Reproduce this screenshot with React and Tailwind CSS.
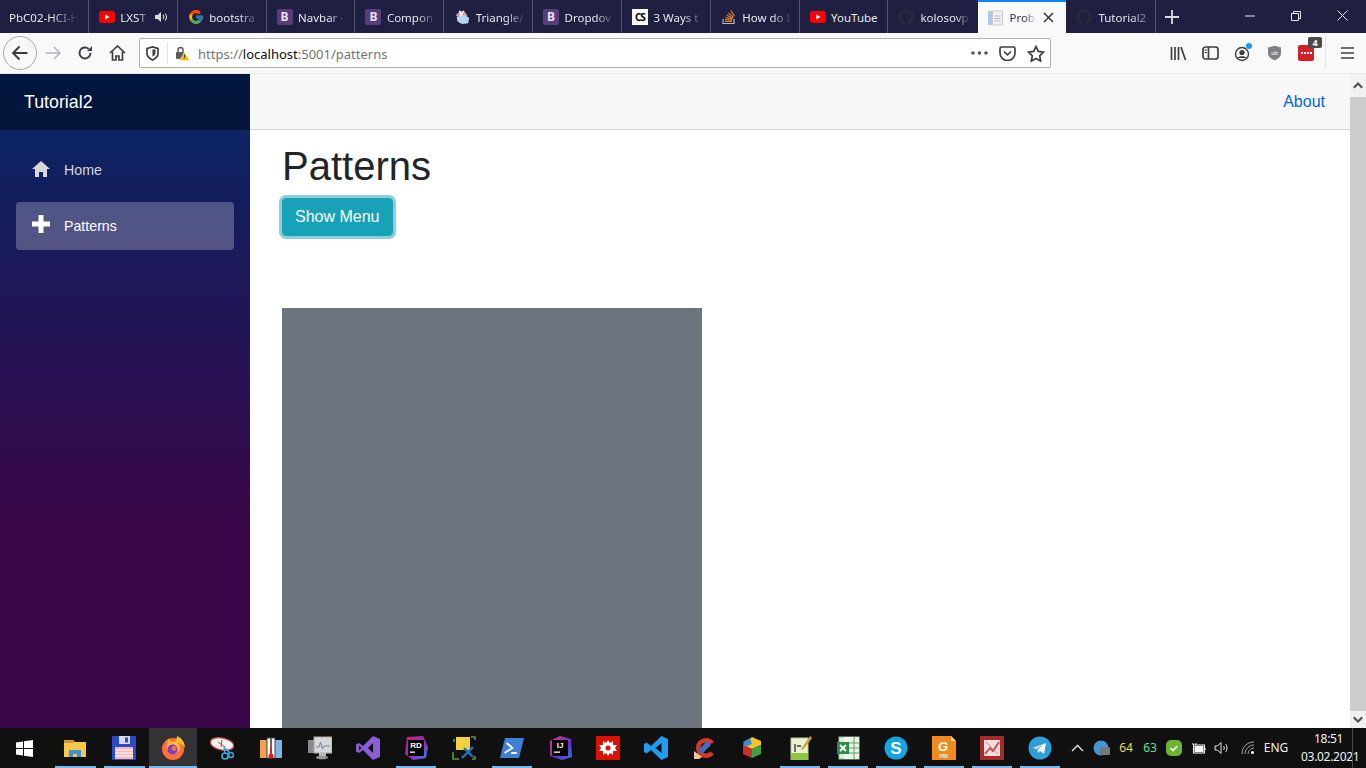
import React from "react";
import { FcGoogle } from "react-icons/fc";
import { FaGithub } from "react-icons/fa";

const YT = () => (
  <svg width="16" height="16" viewBox="0 0 16 16"><rect x="0" y="2" width="16" height="12" rx="3" fill="#f00" /><path d="M6.3 5.500v5L10.600 8z" fill="#fff" /></svg>
);
const BS = () => (
  <span className="w-4 h-4 rounded-[2px] bg-[#563d7c] text-[#e8e0f2] text-[12px] font-bold flex items-center justify-center leading-none">B</span>
);
const Mask = () => (
  <svg width="18" height="18" viewBox="0 0 18 18"><path d="M2 7l5-5 5 1 3 4-3 3H6z" fill="#c9a9a0" /><path d="M3 9l10-2 4 3-1 6-7 1-5-3z" fill="#b9d4ee" /><path d="M6 2l3 6M11 2L7 8" stroke="#fff" strokeWidth="1.300" /></svg>
);
const CS = () => (
  <span className="w-4 h-4 bg-white text-black text-[10px] font-bold flex items-center justify-center leading-none tracking-[-1px]">CS</span>
);
const SO = () => (
  <svg width="16" height="16" viewBox="0 0 16 16" fill="none"><path d="M2 10v4.500h11V10" stroke="#bcbbbb" strokeWidth="1.200" /><path d="M4 12.500h7M4 10.600l7 .6M4.600 8.400l6.800 1.800M5.600 6l6.300 3.200M7.400 3.800l5.200 4.600M9.600 1.500l3.800 5.400" stroke="#f48024" strokeWidth="1.100" /></svg>
);
const Doc = () => (
  <svg width="15" height="16" viewBox="0 0 15 16"><rect x="0" y="1" width="5" height="14" fill="#a9c8ea" /><rect x="4.500" y="1" width="10" height="14" fill="#f0f0f3" stroke="#c8c8cf" /><path d="M6.500 6h6M6.500 8.500h6M6.500 11h6" stroke="#b8b8c0" /></svg>
);
const GH = () => <FaGithub className="text-[#2a2a3c]" size={16} />;

const Speaker = () => (
  <svg width="14" height="14" viewBox="0 0 14 14" fill="none" className="absolute left-[65px] top-[10px]"><path d="M1 5h2.500L7 2v10L3.500 9H1z" fill="#d8d8de" /><path d="M9 5c1 1 1 3 0 4M11 3.500c1.800 2 1.800 5 0 7" stroke="#d8d8de" strokeWidth="1.100" /></svg>
);

const tabs = [
  { t: "PbC02-HCI-H" },
  { t: "LXST", i: <YT />, extra: <Speaker /> , w: "w-[30px]" },
  { t: "bootstra", i: <FcGoogle size={16} /> },
  { t: "Navbar ·", i: <BS /> },
  { t: "Compon", i: <BS /> },
  { t: "Triangle/", i: <Mask /> },
  { t: "Dropdov", i: <BS /> },
  { t: "3 Ways t", i: <CS /> },
  { t: "How do I", i: <SO /> },
  { t: "YouTube", i: <YT />, nofade: true },
];

function Tab({ tab }) {
  const fade = tab.nofade ? "" : "[mask-image:linear-gradient(90deg,#000_60%,transparent_100%)]";
  return (
    <div className="relative w-[88.85px] h-full shrink-0 flex items-center pl-[10px] border-r border-[#55566e]">
      {tab.i ? <span className="w-4 h-4 mr-[5.500px] shrink-0 flex items-center justify-center">{tab.i}</span> : null}
      <span className={`text-[11.5px] pt-[2px] text-[#e6e6ec] whitespace-nowrap overflow-hidden ${tab.w || "w-[50px]"} ${tab.i ? "" : "!w-[70px] -ml-px"} ${fade}`}>{tab.t}</span>
      {tab.extra}
    </div>
  );
}

const Back = () => (
  <div className="w-[34px] h-[34px] rounded-full border border-[#a8a8aa] bg-[#f9f9fa] flex items-center justify-center">
    <svg width="18" height="16" viewBox="0 0 18 16" fill="none" stroke="#3c3c40" strokeWidth="1.900"><path d="M16.500 8H2M8.500 1.500L2 8l6.500 6.500" /></svg>
  </div>
);

const TB = ({ w = 32, children }) => (
  <span style={{ width: w }} className="h-full shrink-0 flex items-center justify-center">{children}</span>
);

const S = { stroke: "#3f3f43", strokeWidth: 1.700, fill: "none" };

function Toolbar() {
  return (
    <div className="h-[41px] bg-[#f9f9fa] flex items-center shrink-0 border-b border-[#e8e8ea]">
      <div className="pl-[3px] w-[37px] shrink-0"><Back /></div>
      <TB w={32}><svg width="16" height="14" viewBox="0 0 16 14" fill="none" stroke="#b4b4b6" strokeWidth="1.500"><path d="M0.500 7H15M9 1l6 6-6 6" /></svg></TB>
      <TB w={32}><svg width="16" height="16" viewBox="0 0 16 16" {...S} strokeWidth="1.900"><path d="M13.500 8a5.500 5.500 0 1 1-1.800-4.100" /><path d="M15 1v5h-5" fill="#3f3f43" stroke="none" /></svg></TB>
      <TB w={32}><svg width="17" height="16" viewBox="0 0 17 16" {...S}><path d="M1 8l7.500-7 7.500 7" /><path d="M3.500 6.500V15h3.500v-4h3v4h3.500V6.500" /></svg></TB>
      <div className="w-[912px] h-[30px] ml-[6px] bg-white border border-[#b3b3b5] rounded-[2px] flex items-center shrink-0">
        <span className="w-[27px] pr-[2px] flex justify-center shrink-0">
          <svg width="13" height="15" viewBox="0 0 13 15" {...S}><path d="M1 2.500l5.500-1.500 5.500 1.500v5c0 3-2.500 5-5.500 6.500-3-1.500-5.500-3.500-5.500-6.500z" /><path d="M6.500 3.500h3v3.500c0 1.500-1.500 3-3 3.500z" fill="#3f3f43" stroke="none" /></svg>
        </span>
        <span className="w-px h-[22px] bg-[#e2e2e4] shrink-0" />
        <span className="w-[30px] pr-[1px] flex justify-center shrink-0">
          <svg width="15" height="15" viewBox="0 0 15 15"><rect x="1" y="6" width="8" height="7" rx="1" fill="#5c5c60" /><path d="M3 6V4a2.500 2.500 0 0 1 5 0v2" fill="none" stroke="#5c5c60" strokeWidth="1.500" /><path d="M9.500 6l5 8.500h-10z" fill="#f4b400" stroke="#f9f9fa" strokeWidth=".5" /><path d="M9.500 8.800v3" stroke="#333" /></svg>
        </span>
        <span className="text-[13px] pt-[3px] text-[#737373] whitespace-nowrap">https://<span className="text-[#0c0c0d]">localhost</span>:5001/patterns</span>
        <span className="ml-auto flex items-center h-full">
          <TB w={28}><svg width="17" height="4" viewBox="0 0 17 4" fill="#55555a"><circle cx="2" cy="2" r="1.800" /><circle cx="8.500" cy="2" r="1.800" /><circle cx="15" cy="2" r="1.800" /></svg></TB>
          <TB w={28}><svg width="17" height="15" viewBox="0 0 17 15" {...S}><path d="M1 2.500c0-1 .6-1.500 1.500-1.500h12c.9 0 1.500.5 1.500 1.500v4.500a7.500 7.500 0 0 1-15 0z" /><path d="M5 5.500l3.500 3.300L12 5.500" /></svg></TB>
          <span className="w-[1px]" />
          <TB w={28}><svg width="18" height="17" viewBox="0 0 18 17" {...S}><path d="M9 1.500l2.300 4.900 5.200.7-3.800 3.700 1 5.300L9 13.500l-4.700 2.600 1-5.300L1.500 7.100l5.200-.7z" /></svg></TB>
        </span>
      </div>
      <div className="ml-[112px] flex items-center h-full">
        <TB w={31}><svg width="17" height="15" viewBox="0 0 17 15" {...S}><path d="M1.500 1v13M5 1v13M8.500 1v13M11 1l4.500 13" /></svg></TB>
        <TB w={32}><svg width="17" height="14" viewBox="0 0 17 14" {...S}><rect x="1" y="1" width="15" height="12" rx="2.500" /><path d="M6.500 1v12" /><path d="M2.500 4h2.500M2.500 6.500h2.500" strokeWidth="1.200" /></svg></TB>
        <TB w={32}>
          <span className="relative w-[17px] h-[17px]">
            <svg width="17" height="17" viewBox="0 0 17 17" {...S} strokeWidth="1.400"><circle cx="8" cy="9" r="6.500" /><circle cx="8" cy="7.500" r="2.600" fill="#3f3f43" stroke="none" /><path d="M3.500 13c1-2.500 8-2.500 9 0" fill="#3f3f43" stroke="none" /></svg>
            <span className="absolute right-[-1px] top-[-2px] w-[6px] h-[6px] rounded-full bg-[#0a9dff]" />
          </span>
        </TB>
        <TB w={32}><svg width="15" height="16" viewBox="0 0 15 16"><path d="M7.500.8l6.500 1.700v6c0 3-3 5.500-6.500 6.800C4 14 1 11.500 1 8.500v-6z" fill="#7f7f86" /><text x="7.500" y="9.500" fontSize="6" fill="#fff" textAnchor="middle" fontFamily="Liberation Sans">ub</text></svg></TB>
        <TB w={32}>
          <span className="relative w-[16px] h-[16px] bg-[#d32027] rounded-[2px] flex items-center justify-center">
            <span className="flex gap-[1px]"><i className="w-[2px] h-[2px] bg-white" /><i className="w-[2px] h-[2px] bg-white" /><i className="w-[2px] h-[2px] bg-white" /><i className="w-[2px] h-[2px] bg-white" /></span>
            <span className="absolute left-[10px] top-[-8px] w-[14px] h-[11px] rounded-[2px] bg-[#4a4a4f] text-white text-[9px] font-bold leading-[11px] text-center">4</span>
          </span>
        </TB>
        <span className="w-px h-[32px] bg-[#e5e5e7] ml-[3px]" />
        <TB w={43}><svg width="13" height="12" viewBox="0 0 13 12" stroke="#3f3f43" strokeWidth="1.600"><path d="M0 1h13M0 6h13M0 11h13" /></svg></TB>
      </div>
    </div>
  );
}

function TitleBar() {
  return (
    <div className="h-[33px] bg-[#1f2041] flex shrink-0 font-['Noto_Sans','Open_Sans',sans-serif]">
      {tabs.map((t, i) => <Tab key={i} tab={t} />)}
      <div className="w-[90px] h-full flex items-center pl-[10px] shrink-0">
        <span className="w-4 h-4 mr-[6px] shrink-0"><GH /></span>
        <span className="text-[11.5px] pt-[2px] text-[#e6e6ec] whitespace-nowrap overflow-hidden w-[50px] [mask-image:linear-gradient(90deg,#000_70%,transparent_100%)]">kolosovp</span>
      </div>
      <div className="w-[88px] h-full bg-[#f9f9fa] border-t-2 border-[#0a84ff] flex items-center pl-[10px] shrink-0">
        <span className="mr-[6px]"><Doc /></span>
        <span className="text-[11.5px] pt-[1px] text-[#38383d] whitespace-nowrap overflow-hidden w-[27px] [mask-image:linear-gradient(90deg,#000_60%,transparent_100%)]">Probl</span>
        <svg width="11" height="11" viewBox="0 0 11 11" stroke="#38383d" strokeWidth="1.500" className="ml-[7px]"><path d="M1 1l9 9M10 1l-9 9" /></svg>
      </div>
      <div className="w-[90px] h-full flex items-center pl-[10px] shrink-0 border-r border-[#55566e]">
        <span className="w-4 h-4 mr-[6px] shrink-0"><GH /></span>
        <span className="text-[11.5px] pt-[2px] text-[#e6e6ec] whitespace-nowrap overflow-hidden w-[48px] [mask-image:linear-gradient(90deg,#000_65%,#0006_100%)]">Tutorial2</span>
      </div>
      <span className="w-[32px] h-full flex items-center justify-center shrink-0">
        <svg width="14" height="14" viewBox="0 0 14 14" stroke="#dcdce2" strokeWidth="1.800"><path d="M7 0v14M0 7h14" /></svg>
      </span>
      <div className="ml-auto flex h-full">
        <span className="w-[46px] flex items-center justify-center -mt-[2px]"><svg width="10" height="10" viewBox="0 0 10 10" stroke="#e8e8ee"><path d="M0 5h10" /></svg></span>
        <span className="w-[46px] flex items-center justify-center -mt-[2px]"><svg width="10" height="10" viewBox="0 0 10 10" fill="none" stroke="#e8e8ee"><path d="M.5 2.500h7v7h-7zM2.500 2.500V.5h7v7h-2" /></svg></span>
        <span className="w-[47px] flex items-center justify-center -mt-[2px]"><svg width="11" height="11" viewBox="0 0 11 11" stroke="#e8e8ee"><path d="M.5.5l10 10M10.500.5l-10 10" /></svg></span>
      </div>
    </div>
  );
}

const HomeIcon = () => (
  <svg width="18" height="16" viewBox="0 0 18 16" fill="#d7d7d7"><path d="M9 0L0 8h3v8h4v-5h4v5h4V8h3z" /></svg>
);
const PlusIcon = () => (
  <svg width="18" height="18" viewBox="0 0 18 18" fill="#fff"><path d="M6.500 0h5v6.500H18v5h-6.500V18h-5v-6.500H0v-5h6.500z" /></svg>
);

function Sidebar() {
  return (
    <aside className="w-[250px] shrink-0 h-full bg-[linear-gradient(180deg,#052767_0%,#3a0647_70%)] font-['Liberation_Sans',Arial,sans-serif]">
      <div className="h-[56px] bg-[rgba(0,0,0,0.4)] flex items-center pl-6 text-[17.8px] text-white">Tutorial2</div>
      <nav className="px-4 pt-4 flex flex-col gap-2">
        <a className="h-12 rounded-[4px] flex items-center pl-4 text-[14.2px] text-[#d7d7d7]">
          <span className="w-8 shrink-0 -mt-[2px]"><HomeIcon /></span><span className="pt-[2px]">Home</span>
        </a>
        <a className="h-12 rounded-[4px] flex items-center pl-4 text-[14.2px] text-white bg-[rgba(255,255,255,0.25)]">
          <span className="w-8 shrink-0 -mt-1"><PlusIcon /></span><span className="pt-[2px]">Patterns</span>
        </a>
      </nav>
    </aside>
  );
}

function Content() {
  return (
    <main className="flex-1 min-w-0 h-full overflow-hidden font-['Liberation_Sans',Arial,sans-serif] text-[#212529]">
      <div className="h-[56px] bg-[#f7f7f7] border-b border-[#d6d5d5] flex items-center justify-end pr-[25px] text-[16px] text-[#0366d6]">About</div>
      <div className="px-8 pt-3">
        <h1 className="text-[40px] leading-[48px] font-normal mb-2">Patterns</h1>
        <button className="h-[38px] px-3 rounded-[4px] bg-[#17a2b8] text-white text-[16px] shadow-[0_0_0_3px_rgba(23,162,184,0.5)] border border-[#17a2b8]">Show Menu</button>
        <div className="mt-[72px] w-[420px] h-[420px] bg-[#6c757d]" />
      </div>
    </main>
  );
}

function Scrollbar() {
  return (
    <div className="w-4 h-full shrink-0 bg-[#f1f1f1] flex flex-col">
      <div className="h-[23px] shrink-0 flex items-center justify-center">
        <svg width="10" height="7" viewBox="0 0 10 7" fill="#505050"><path d="M5 0L10 5 8.500 6.500 5 3 1.500 6.500 0 5z" /></svg>
      </div>
      <div className="flex-1 bg-[#cdcdcd]" />
      <div className="h-[17px] shrink-0 flex items-center justify-center">
        <svg width="10" height="7" viewBox="0 0 10 7" fill="#505050"><path d="M5 7L10 2 8.500 .5 5 4 1.500 .5 0 2z" /></svg>
      </div>
    </div>
  );
}

const I = ({ children, s = 24, vb = "0 0 24 24" }) => <svg width={s} height={s} viewBox={vb}>{children}</svg>;

const apps = [
  { cls: "w-[49px] pr-[1px]", open: 1, icon: <I><path d="M1 4h9l2 2h11v15H1z" fill="#f5c84c" /><path d="M1 4h9l1 3H1z" fill="#c99a2e" /><path d="M6 21v-7h12v7h-4v-3h-4v3z" fill="#3f8fd6" /></I> },
  { cls: "w-[49px] pr-[1px]", open: 1, icon: <I><rect x="0" y="0" width="24" height="24" rx="1" fill="#2b49c8" /><rect x="7" y="0" width="11" height="8" fill="#d9d9e6" /><rect x="13" y="1.500" width="3" height="5" fill="#2b49c8" /><rect x="3" y="11" width="18" height="12" fill="#f5b8b8" /><path d="M3 14h18M3 17h18M3 20h18" stroke="#fff" /></I> },
  { cls: "w-[48px] mr-[3px]", open: 1, active: 1, icon: <I><circle cx="12" cy="13" r="11" fill="#ff7139" /><path d="M7 2c1 3 3 4 6 4 2-1 3-3 3-6 5 2 8 7 8 12-2-3-4-5-7-5 2 2 3 5 1 8l-6 3c-4 0-6-3-6-6z" fill="#ffbd2e" /><circle cx="11.500" cy="13.500" r="5" fill="#7a3bd1" /><circle cx="13" cy="12.500" r="2.400" fill="#ff7139" /></I> },
  { cls: "w-[48px] -translate-x-[2px]", icon: <I><ellipse cx="12" cy="8" rx="12" ry="6" fill="#f4f4f4" transform="rotate(12 12 8)" stroke="#c43c3c" strokeWidth="1.300" /><path d="M8 6l7 5M12 4l-1 7" stroke="#c43c3c" /><circle cx="15" cy="20" r="3" fill="none" stroke="#3fa4dc" strokeWidth="1.700" /><circle cx="21" cy="19" r="2.500" fill="none" stroke="#3fa4dc" strokeWidth="1.700" /><path d="M14 11l1 7M15 12l5 5" stroke="#3fa4dc" strokeWidth="1.500" /></I> },
  { cls: "w-[48px] -translate-x-[1px]", icon: <I><rect x="1" y="4" width="8" height="18" fill="#f0a050" /><rect x="15" y="4" width="8" height="18" fill="#7ab6e6" /><rect x="8" y="2" width="8" height="20" fill="#fff" stroke="#444" /><rect x="11" y="2" width="2" height="16" fill="#666" /><rect x="11" y="12" width="2" height="7" fill="#d42020" /><circle cx="12" cy="20" r="2.500" fill="#d42020" /></I> },
  { icon: <I><rect x="0" y="4" width="17" height="13" fill="#8a8a8a" /><rect x="6" y="1" width="18" height="16" fill="#d8d8d8" stroke="#aaa" /><path d="M8 11h3l1.500-5 2 7 1.500-3h6" fill="none" stroke="#5585b8" strokeWidth=".9" /><rect x="11" y="17" width="7" height="3" fill="#bbb" /><ellipse cx="14" cy="21.500" rx="6" ry="1.700" fill="#999" /></I> },
  { icon: <I><path d="M17 0l7 3v18l-7 3-10-10-4 3-3-1.500V8.500L3 7l4 3zM17 7l-5 5 5 5zM3 9.500v5l2.500-2.500z" fill="#8a5fd6" fillRule="evenodd" /></I> },
  { open: 1, icon: <I><path d="M3 1l16-1 5 11-2 11-13 2-8-6z" fill="url(#rd)" /><defs><linearGradient id="rd" x1="0" y1="0" x2="1" y2="1"><stop offset="0" stopColor="#d01f6f" /><stop offset=".6" stopColor="#8d2fbf" /><stop offset="1" stopColor="#2c8de8" /></linearGradient></defs><rect x="4" y="4" width="16" height="16" fill="#000" /><text x="12" y="12" fontSize="8" fontWeight="700" fill="#fff" textAnchor="middle" fontFamily="Liberation Sans">RD</text><rect x="6" y="15.500" width="5" height="1.300" fill="#fff" /></I> },
  { icon: <I><path d="M4 1h14v13H4z" fill="#f4d23c" /><path d="M1 16v7h6M23 4V1h-4M2 3v3M23 20v3h-3" fill="none" stroke="#4d9a3d" strokeWidth="1.600" /><path d="M10 22l11-11M12 12l9 9" stroke="#1c76c8" strokeWidth="2.400" /></I> },
  { open: 1, dbl: 1, icon: <I><path d="M5 2h19l-5 20H0z" fill="#3f7fd6" /><path d="M6.500 7l6 5-8 5" fill="none" stroke="#fff" strokeWidth="1.800" /><path d="M11 17h6" stroke="#fff" strokeWidth="1.800" /></I> },
  { icon: <I><path d="M2 5l10-5 11 3 1 18-10 3-12-4z" fill="url(#ij)" /><defs><linearGradient id="ij" x1="0" y1="0" x2="1" y2="1"><stop offset="0" stopColor="#e8318a" /><stop offset=".6" stopColor="#5f37c9" /><stop offset="1" stopColor="#2a7fe3" /></linearGradient></defs><rect x="4" y="4" width="16" height="16" fill="#000" /><text x="12" y="12" fontSize="8" fontWeight="700" fill="#fff" textAnchor="middle" fontFamily="Liberation Sans">IJ</text><rect x="6" y="15.500" width="6" height="1.300" fill="#fff" /></I> },
  { icon: <I><rect width="24" height="24" fill="#dd1100" /><path d="M12 4l2 3 3-2 0 4 4 0-2 3 2 3-4 0 0 4-3-2-2 3-2-3-3 2 0-4-4 0 2-3-2-3 4 0 0-4 3 2z" fill="#fff" /><circle cx="12" cy="12" r="2.500" fill="#dd1100" /></I> },
  { icon: <I><path d="M17.500 0L24 3v18l-6.500 3L7 14 2.500 17.500 0 16V8l2.500-1.500L7 10zM17.500 7L11.500 12l6 5z" fill="#1f9cf0" fillRule="evenodd" /></I> },
  { icon: <I><path d="M22 6a10 10 0 1 0 0 12l-4-2.500a5.500 5.500 0 1 1 0-7z" fill="#d6362c" /><path d="M15 5L6 14l4 4 9-9z" fill="#3f6fb8" /><path d="M2 15l8 6-3 2H2z" fill="#e9c9a0" /></I> },
  { icon: <I><path d="M12 1l9 4v4l-9 4-9-4z" fill="#f2c52b" /><path d="M3 9l9 4v9l-9-4z" fill="#cc2e2e" /><path d="M12 13l9-4v9l-9 4z" fill="#3fa04a" /><path d="M3 6l7-4 2 6-7 3z" fill="#3f8ad6" /></I> },
  { open: 1, icon: <I><path d="M3 2h17v22H3z" fill="#e9f3d0" stroke="#b9c9a0" /><path d="M3 17h17v7H3z" fill="#8ec63f" /><path d="M7 8v8M9 10h4" stroke="#335" strokeWidth="1.400" /><path d="M22 0l2 2-9 12-2-1z" fill="#d9a13a" /></I> },
  { open: 1, dbl: 1, icon: <I><rect x="3" y="1" width="20" height="22" fill="#d9ead9" stroke="#9cc49c" /><path d="M8 1h15v22H8z" fill="#eaf3ea" /><path d="M13 7h10M13 12h10M13 17h10M18 1v22" stroke="#62a062" /><rect x="1" y="6" width="12" height="12" fill="#2f8a4a" /><path d="M4 9l6 6M10 9l-6 6" stroke="#fff" strokeWidth="1.800" /></I> },
  { open: 1, icon: <I><circle cx="12" cy="12" r="11.500" fill="#12a5e0" /><text x="12" y="18" fontSize="17" fontWeight="700" fill="#fff" textAnchor="middle" fontFamily="Liberation Sans">S</text></I> },
  { open: 1, icon: <I><path d="M0 0h19l5 5v19H0z" fill="#f08a1c" /><path d="M19 0l5 5h-5z" fill="#fbd9a8" /><text x="11" y="15" fontSize="13" fontWeight="700" fontStyle="italic" fill="#fff" textAnchor="middle" fontFamily="Liberation Sans">G</text><text x="12" y="22" fontSize="4.500" fontWeight="700" fill="#fff" textAnchor="middle" fontFamily="Liberation Sans">PDF</text></I> },
  { open: 1, icon: <I><rect x="0" y="0" width="24" height="24" fill="#a52a2a" /><rect x="4" y="4" width="16" height="16" fill="#f2dede" /><path d="M5 18l5-6 3 3 6-9" fill="none" stroke="#c44" strokeWidth="1.800" /><path d="M6 6l12 12" stroke="#d88" /></I> },
  { open: 1, icon: <I><circle cx="12" cy="12" r="11.500" fill="#2c9fd8" /><path d="M5 12l13-5-2 11-4-3-2 2-.5-3.500 6-5-7.500 4.500z" fill="#fff" /></I> },
];

function Taskbar() {
  return (
    <div className="h-10 bg-[#101010] flex items-stretch shrink-0 font-['Noto_Sans','Open_Sans',sans-serif]">
      <span className="w-[48px] flex items-center justify-center shrink-0">
        <svg width="17" height="17" viewBox="0 0 17 17" fill="#fff"><path d="M0 2.400l7-1v6.600H0zM8 1.300L17 0v8H8zM0 9h7v6.600l-7-1zM8 9h9v8l-9-1.300z" /></svg>
      </span>
      <div className="w-[3px] shrink-0" />
      {apps.map((a, i) => (
        <span key={i} className={`relative flex items-center justify-center shrink-0 ${a.cls || "w-[48px]"} ${a.active ? "bg-[#333335]" : ""}`}>
          {a.icon}
          {a.open ? <span className={`absolute bottom-0 h-[2px] bg-[#76b9ed] ${a.active ? "left-0 right-0" : "left-1 right-1"}`} /> : null}
        </span>
      ))}
      <div className="ml-auto flex items-center h-full pr-[13px]">
        <span className="w-[18px] flex justify-center mr-[4px]"><svg width="13" height="8" viewBox="0 0 13 8" fill="none" stroke="#e8e8e8" strokeWidth="1.300"><path d="M1 7l5.500-5.500L12 7" /></svg></span>
        <span className="w-[24px] flex justify-center"><svg width="18" height="18" viewBox="0 0 18 18"><circle cx="8" cy="9" r="7.500" fill="#3f97d6" /><rect x="7" y="8" width="10" height="8" rx="1" fill="#777" /></svg></span>
        <span className="w-[24px] text-center text-[12px] text-[#f2d648]">64</span>
        <span className="w-[24px] text-center text-[12px] text-[#5fe08c]">63</span>
        <span className="w-[24px] flex justify-center"><svg width="16" height="16" viewBox="0 0 16 16"><rect width="16" height="16" rx="5" fill="#6eb52f" /><path d="M4.500 8l2.500 2.500 4.500-4.500" fill="none" stroke="#fff" strokeWidth="1.700" /></svg></span>
        <span className="w-[24px] flex justify-center"><svg width="17" height="14" viewBox="0 0 17 14" fill="none" stroke="#fff"><rect x="3.500" y="4" width="11" height="8" /><rect x="5" y="5.500" width="8" height="5" fill="#fff" /><path d="M15 7v2M3 2v2M6 2v2" /></svg></span>
        <span className="w-[24px] flex justify-center"><svg width="16" height="14" viewBox="0 0 16 14" fill="none" stroke="#e8e8e8"><path d="M1 5h2.500L7 1.500v11L3.500 9H1zM9.500 5c1 1 1 3 0 4M11.500 3c2 2 2 6 0 8" /></svg></span>
        <span className="w-[28px] flex justify-center"><svg width="15" height="14" viewBox="0 0 15 14" fill="none" stroke="#aaa"><path d="M1 13C1 6 6 1 13 1M4 13c0-5 4-9 9-9M7 13c0-3 3-6 6-6" /><circle cx="11.500" cy="11.500" r="1.500" fill="#fff" stroke="none" /></svg></span>
        <span className="w-[28px] text-center text-[12px] text-[#f0f0f0]">ENG</span>
        <span className="w-[49px] ml-[11px] text-left text-[12px] text-[#f0f0f0] leading-[18px] whitespace-nowrap tracking-[-0.3px]">
          <div className="pl-[13px]">18:51</div><div>03.02.2021</div>
        </span>
        <span className="w-px h-full bg-[#4a4a4a] ml-[2px]" />
      </div>
    </div>
  );
}

export default function App() {
  return (
    <div className="h-screen w-screen overflow-hidden flex flex-col bg-white">
      <TitleBar />
      <div className="font-['Noto_Sans','Open_Sans',sans-serif]"><Toolbar /></div>
      <div className="flex-1 min-h-0 flex">
        <Sidebar />
        <Content />
        <Scrollbar />
      </div>
      <Taskbar />
    </div>
  );
}
